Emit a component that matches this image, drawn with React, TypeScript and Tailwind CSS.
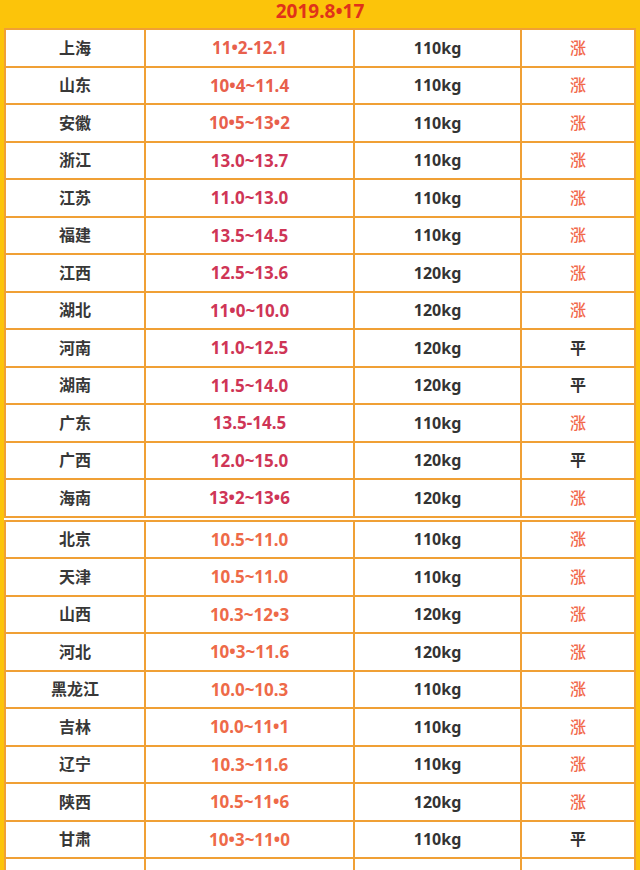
type Row = { area: string; range: string; weight: string; trend: '涨' | '平'; tone: 'salmon' | 'crimson' | 'orange' };

const SOUTH: Row[] = [
  { area: '上海', range: '11•2-12.1', weight: '110kg', trend: '涨', tone: 'salmon' },
  { area: '山东', range: '10•4~11.4', weight: '110kg', trend: '涨', tone: 'salmon' },
  { area: '安徽', range: '10•5~13•2', weight: '110kg', trend: '涨', tone: 'salmon' },
  { area: '浙江', range: '13.0~13.7', weight: '110kg', trend: '涨', tone: 'crimson' },
  { area: '江苏', range: '11.0~13.0', weight: '110kg', trend: '涨', tone: 'crimson' },
  { area: '福建', range: '13.5~14.5', weight: '110kg', trend: '涨', tone: 'crimson' },
  { area: '江西', range: '12.5~13.6', weight: '120kg', trend: '涨', tone: 'crimson' },
  { area: '湖北', range: '11•0~10.0', weight: '120kg', trend: '涨', tone: 'crimson' },
  { area: '河南', range: '11.0~12.5', weight: '120kg', trend: '平', tone: 'crimson' },
  { area: '湖南', range: '11.5~14.0', weight: '120kg', trend: '平', tone: 'crimson' },
  { area: '广东', range: '13.5-14.5', weight: '110kg', trend: '涨', tone: 'crimson' },
  { area: '广西', range: '12.0~15.0', weight: '120kg', trend: '平', tone: 'crimson' },
  { area: '海南', range: '13•2~13•6', weight: '120kg', trend: '涨', tone: 'crimson' },
];

const NORTH: Row[] = [
  { area: '北京', range: '10.5~11.0', weight: '110kg', trend: '涨', tone: 'orange' },
  { area: '天津', range: '10.5~11.0', weight: '110kg', trend: '涨', tone: 'orange' },
  { area: '山西', range: '10.3~12•3', weight: '120kg', trend: '涨', tone: 'orange' },
  { area: '河北', range: '10•3~11.6', weight: '120kg', trend: '涨', tone: 'orange' },
  { area: '黑龙江', range: '10.0~10.3', weight: '110kg', trend: '涨', tone: 'orange' },
  { area: '吉林', range: '10.0~11•1', weight: '110kg', trend: '涨', tone: 'orange' },
  { area: '辽宁', range: '10.3~11.6', weight: '110kg', trend: '涨', tone: 'orange' },
  { area: '陕西', range: '10.5~11•6', weight: '120kg', trend: '涨', tone: 'orange' },
  { area: '甘肃', range: '10•3~11•0', weight: '110kg', trend: '平', tone: 'orange' },
  { area: '', range: '', weight: '', trend: '涨', tone: 'orange' },
];

const TONE = {
  salmon: 'text-[#e8604c]',
  crimson: 'text-[#cf3556]',
  orange: 'text-[#ee6a48]',
};

const cell = 'flex h-[35.5px] items-center justify-center bg-white';

function PriceTable({ rows, last }: { rows: Row[]; last?: boolean }) {
  return (
    <div className="grid grid-cols-[138px_207px_165px_112px] gap-[2px] bg-[#f0a035] p-[2px]">
      {rows.map((r, i) => {
        const blank = last && i === rows.length - 1;
        return (
          <div key={i} className="contents">
            <div className={`${cell} text-[#383838]`}>{r.area}</div>
            <div className={`${cell} text-[17px] ${TONE[r.tone]}`}>{r.range}</div>
            <div className={`${cell} text-[#333333]`}>{r.weight}</div>
            <div
              className={`${cell} ${
                r.trend === '涨' ? 'font-medium text-[#f2694c]' : 'text-[#333333]'
              }`}
            >
              {blank ? '' : r.trend}
            </div>
          </div>
        );
      })}
    </div>
  );
}

export default function App() {
  return (
    <div
      className="h-[870px] w-[640px] overflow-hidden bg-[#fcc40a] px-[4px] text-[16px] font-bold"
      style={{ fontFamily: '"Noto Sans", "Noto Sans CJK SC", sans-serif' }}
    >
      <div className="flex h-[28px] items-start justify-center pt-[1px] text-[19px] leading-[20px] text-[#e0321a]">
        2019.8•17
      </div>
      <div className="bg-white">
        <PriceTable rows={SOUTH} />
        <div className="h-[2px]" />
        <PriceTable rows={NORTH} last />
      </div>
    </div>
  );
}
